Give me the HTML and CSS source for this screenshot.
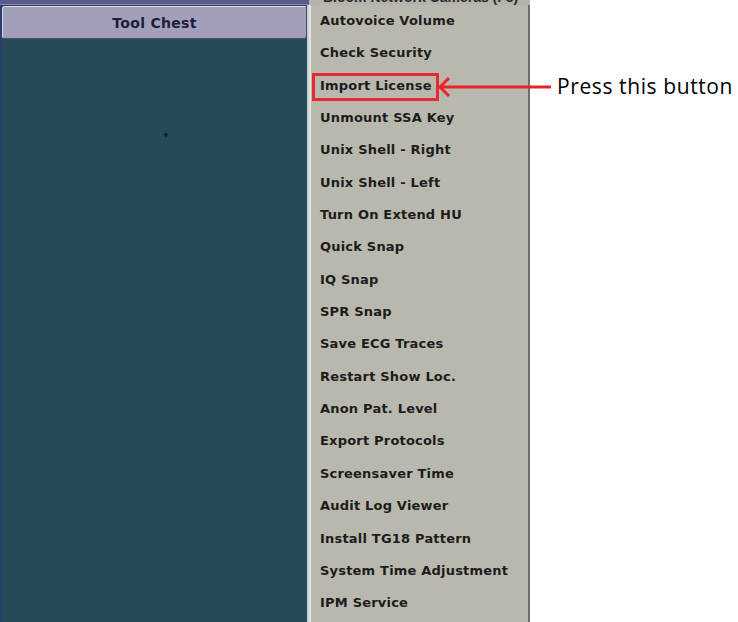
FILE: index.html
```html
<!DOCTYPE html>
<html>
<head>
<meta charset="utf-8">
<link rel="stylesheet" href="styles.css">
</head>
<body>
<div class="page">
  <div class="screen">
    <div class="topbar">
      <div class="topbar-left"></div>
      <div class="topbar-right"><span class="topbar-text">Bloom Network Cameras (F8)</span></div>
    </div>
    <div class="main">
      <div class="left">
        <div class="tool-btn">Tool Chest</div>
        <div class="panel"><span class="cursor">+</span></div>
      </div>
      <div class="sep"></div>
      <ul class="menu">
        <li>Autovoice Volume</li>
        <li>Check Security</li>
        <li>Import License</li>
        <li>Unmount SSA Key</li>
        <li>Unix Shell - Right</li>
        <li>Unix Shell - Left</li>
        <li>Turn On Extend HU</li>
        <li>Quick Snap</li>
        <li>IQ Snap</li>
        <li>SPR Snap</li>
        <li>Save ECG Traces</li>
        <li>Restart Show Loc.</li>
        <li>Anon Pat. Level</li>
        <li>Export Protocols</li>
        <li>Screensaver Time</li>
        <li>Audit Log Viewer</li>
        <li>Install TG18 Pattern</li>
        <li>System Time Adjustment</li>
        <li>IPM Service</li>
      </ul>
    </div>
  </div>
  <div class="highlight"></div>
  <svg class="arrow" width="120" height="24" viewBox="0 0 120 24">
    <line x1="3" y1="12" x2="114" y2="12" stroke="#e8242b" stroke-width="3"/>
    <polyline points="12,3 3,12 12,21" fill="none" stroke="#e8242b" stroke-width="3"/>
  </svg>
  <div class="label">Press this button</div>
</div>
</body>
</html>
```
FILE: styles.css
```css
html, body {
  margin: 0;
  padding: 0;
  background: #ffffff;
}
.page {
  position: relative;
  width: 738px;
  height: 622px;
  overflow: hidden;
}
.screen {
  width: 530px;
  height: 622px;
  background: #264a56;
  display: flex;
  flex-direction: column;
  overflow: hidden;
}
.topbar {
  height: 5px;
  display: flex;
  flex-shrink: 0;
}
.topbar-left {
  width: 309px;
  background: #5c5a8c;
  border-bottom: 1px solid #8886b4;
  box-sizing: border-box;
}
.topbar-right {
  flex: 1;
  background: #b4b3ad;
  overflow: hidden;
  position: relative;
}
.topbar-text {
  display: block;
  margin-top: -10px;
  margin-left: 14px;
  font: bold 14px "Liberation Sans", Arial, sans-serif;
  color: #2a2a2a;
  line-height: 14px;
  white-space: nowrap;
}
.main {
  flex: 1;
  display: flex;
  min-height: 0;
}
.left {
  width: 307px;
  display: flex;
  flex-direction: column;
  background: #264a56;
  border-left: 2px solid #2a3e70;
  box-sizing: border-box;
}
.tool-btn {
  height: 33px;
  margin: 1px 0 1px 0;
  box-sizing: border-box;
  background: #a29fba;
  border: 1px solid #d6d5e6;
  border-right-color: #4c4a6c;
  border-bottom-color: #4c4a6c;
  border-radius: 3px;
  font: bold 14px "DejaVu Sans", "Liberation Sans", sans-serif;
  color: #1e1d3a;
  display: flex;
  align-items: center;
  justify-content: center;
  letter-spacing: 0.3px;
}
.panel {
  flex: 1;
  position: relative;
  background: #264a56;
}
.cursor {
  position: absolute;
  left: 161px;
  top: 91px;
  font: bold 7px "DejaVu Sans", sans-serif;
  color: #000;
}
.sep {
  width: 2px;
  background: #bfd2d8;
}
.menu {
  list-style: none;
  margin: 0;
  padding: 0;
  width: 221px;
  box-sizing: border-box;
  background: #b9b8ae;
  border-left: 2px solid #e6e6de;
  border-right: 2px solid #6e6d68;
}
.menu li {
  height: 32.35px;
  padding-left: 9px;
  font: bold 13px "DejaVu Sans", "Liberation Sans", sans-serif;
  line-height: 32.35px;
  color: #1c1c1c;
  white-space: nowrap;
  letter-spacing: 0.2px;
}
.highlight {
  position: absolute;
  left: 312px;
  top: 73px;
  width: 127px;
  height: 28px;
  box-sizing: border-box;
  border: 3px solid #e52a30;
}
.arrow {
  position: absolute;
  left: 437px;
  top: 75px;
}
.label {
  position: absolute;
  left: 557px;
  top: 71px;
  font: 21px "Open Sans", "Noto Sans", sans-serif;
  color: #000;
  line-height: 30px;
  white-space: nowrap;
  letter-spacing: 0.6px;
}
```
